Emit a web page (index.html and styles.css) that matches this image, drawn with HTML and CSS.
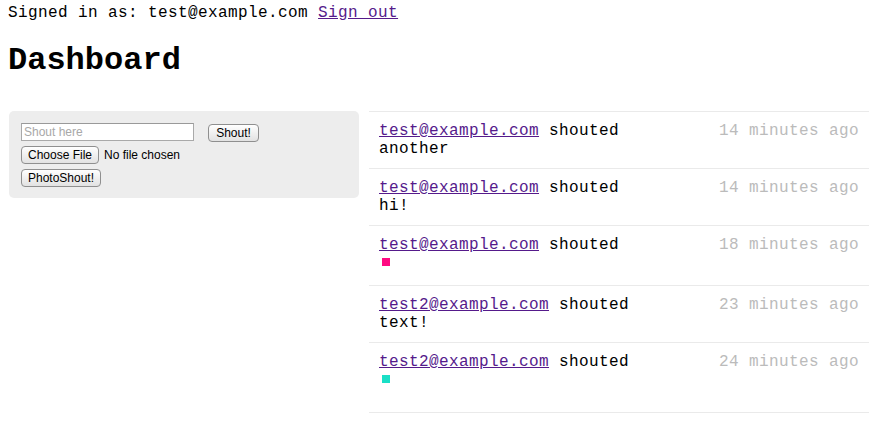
FILE: index.html
```html
<!DOCTYPE html>
<html>
<head>
<meta charset="utf-8">
<link rel="stylesheet" href="styles.css">
</head>
<body>
<div class="session">Signed in as: test@example.com <a href="#" class="visited">Sign out</a></div>
<h1 class="title">Dashboard</h1>
<div class="layout">
  <div class="panel">
    <form class="row row-text">
      <input class="text-input" type="text" placeholder="Shout here">
      <button class="btn btn-shout" type="button">Shout!</button>
    </form>
    <div class="row">
      <span class="btn btn-file">Choose File</span>
      <span class="file-label">No file chosen</span>
    </div>
    <div class="row">
      <button class="btn btn-photo" type="button">PhotoShout!</button>
    </div>
  </div>
  <ul class="shouts">
    <li class="shout">
      <div class="shout-head"><span><a href="#" class="visited">test@example.com</a> shouted</span><span class="time">14 minutes ago</span></div>
      <div class="body">another</div>
    </li>
    <li class="shout">
      <div class="shout-head"><span><a href="#" class="visited">test@example.com</a> shouted</span><span class="time">14 minutes ago</span></div>
      <div class="body">hi!</div>
    </li>
    <li class="shout">
      <div class="shout-head"><span><a href="#" class="visited">test@example.com</a> shouted</span><span class="time">18 minutes ago</span></div>
      <div class="photo photo-pink"></div>
    </li>
    <li class="shout">
      <div class="shout-head"><span><a href="#" class="visited">test2@example.com</a> shouted</span><span class="time">23 minutes ago</span></div>
      <div class="body">text!</div>
    </li>
    <li class="shout shout-last">
      <div class="shout-head"><span><a href="#" class="visited">test2@example.com</a> shouted</span><span class="time">24 minutes ago</span></div>
      <div class="photo photo-teal"></div>
    </li>
  </ul>
</div>
</body>
</html>
```

FILE: styles.css
```css
html, body {
  background: #fff;
}
body {
  margin: 4px 8px 8px 8px;
  font-family: "Liberation Mono", "Courier New", monospace;
  font-size: 16px;
  letter-spacing: 0.4px;
  color: #000;
}
a.visited {
  color: #551a8b;
  text-decoration: underline;
}
.session {
  line-height: 18px;
}
.title {
  font-size: 32px;
  font-weight: bold;
  letter-spacing: 0;
  margin: 21px 0 0 0;
  line-height: 36px;
}
.layout {
  display: flex;
  align-items: flex-start;
  gap: 10px;
  margin-top: 32px;
  margin-left: 1px;
}
.panel {
  width: 350px;
  box-sizing: border-box;
  background: #ededed;
  border-radius: 5px;
  padding: 12px 12px 11px 12px;
  display: flex;
  flex-direction: column;
  gap: 5px;
  font-family: "Liberation Sans", Arial, sans-serif;
  font-size: 12px;
  letter-spacing: 0;
}
.row {
  display: flex;
  align-items: center;
  height: 18px;
  margin: 0;
}
.row-text {
  align-items: flex-start;
}
.text-input {
  box-sizing: border-box;
  width: 173px;
  height: 18px;
  margin: 0;
  padding: 0 2px;
  border: 1px solid #a9a9a9;
  border-top-color: #999;
  background: #fff;
  font-family: "Liberation Sans", Arial, sans-serif;
  font-size: 12px;
  outline: none;
}
.text-input::placeholder {
  color: #a8a8a8;
}
.btn {
  box-sizing: border-box;
  display: inline-flex;
  align-items: center;
  justify-content: center;
  height: 18px;
  margin: 0;
  padding: 0;
  border: 1px solid #8f8f8f;
  border-radius: 4px;
  background: linear-gradient(#ffffff, #f0f0f0 50%, #e2e2e2);
  font-family: "Liberation Sans", Arial, sans-serif;
  font-size: 12px;
  color: #000;
  line-height: 1;
}
.btn-shout {
  width: 51px;
  margin-left: 14px;
  margin-top: 1px;
}
.btn-file {
  width: 78px;
}
.file-label {
  margin-left: 5px;
}
.btn-photo {
  width: 80px;
}
.shouts {
  list-style: none;
  margin: 0;
  padding: 0 0 10px 0;
  width: 500px;
  border-bottom: 1px solid #eaeaea;
}
.shout {
  border-top: 1px solid #eaeaea;
  padding: 10px 10px;
  line-height: 18px;
}
.shout-head {
  display: flex;
  justify-content: space-between;
}
.time {
  color: #bbbbbb;
}
.photo {
  width: 8px;
  height: 8px;
  margin: 4px 0 9px 3px;
}
.photo-pink {
  background: #ff0a82;
}
.photo-teal {
  background: #1adfc6;
}
```
